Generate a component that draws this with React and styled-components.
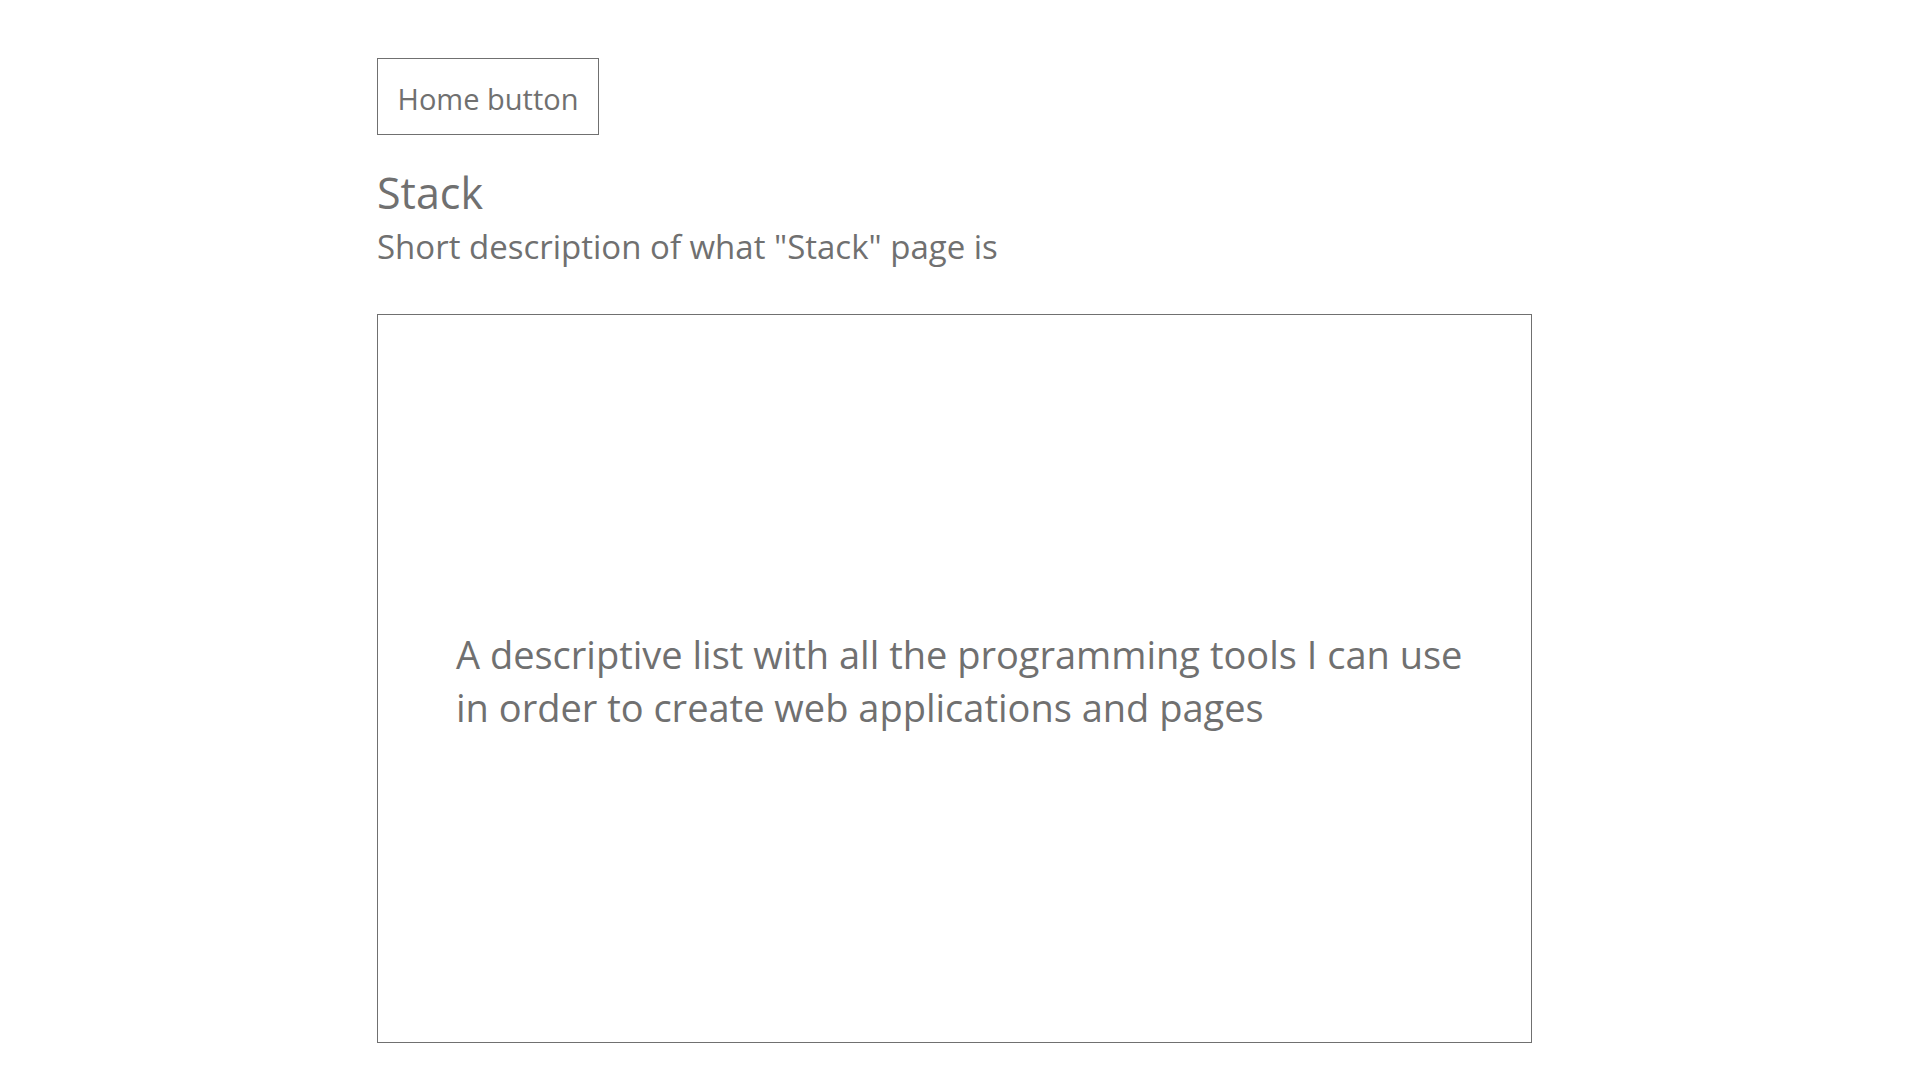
import React from 'react';
import styled, { createGlobalStyle } from 'styled-components';

const GlobalStyle = createGlobalStyle`
  * {
    box-sizing: border-box;
  }
  body {
    margin: 0;
    background-color: #fff;
    font-family: 'Open Sans', 'Noto Sans', sans-serif;
    color: #707070;
  }
`;

const Page = styled.main`
  display: flex;
  flex-direction: column;
  align-items: flex-start;
  padding: 58px 0 0 377px;
`;

const HomeButton = styled.button`
  width: 222px;
  height: 77px;
  padding: 3px 0 0;
  border: 1px solid #707070;
  background-color: #fff;
  color: #707070;
  font-family: inherit;
  font-size: 29px;
  cursor: pointer;
`;

const Heading = styled.header`
  display: flex;
  flex-direction: column;
  margin-top: 32px;
  h1 {
    margin: 0;
    font-size: 43px;
    font-weight: 400;
    line-height: 52px;
  }
  p {
    margin: 6px 0 0;
    font-size: 33px;
    line-height: 44px;
  }
`;

const ContentBox = styled.section`
  display: flex;
  align-items: center;
  width: 1155px;
  height: 729px;
  margin-top: 45px;
  padding: 4px 60px 0 78px;
  border: 1px solid #707070;
  p {
    margin: 0;
    font-size: 38px;
    line-height: 53px;
  }
`;

const App = () => {
  return (
    <>
      <GlobalStyle />
      <Page>
        <HomeButton>Home button</HomeButton>
        <Heading>
          <h1>Stack</h1>
          <p>Short description of what "Stack" page is</p>
        </Heading>
        <ContentBox>
          <p>
            A descriptive list with all the programming tools I can use
            <br />
            in order to create web applications and pages
          </p>
        </ContentBox>
      </Page>
    </>
  );
};

export default App;
